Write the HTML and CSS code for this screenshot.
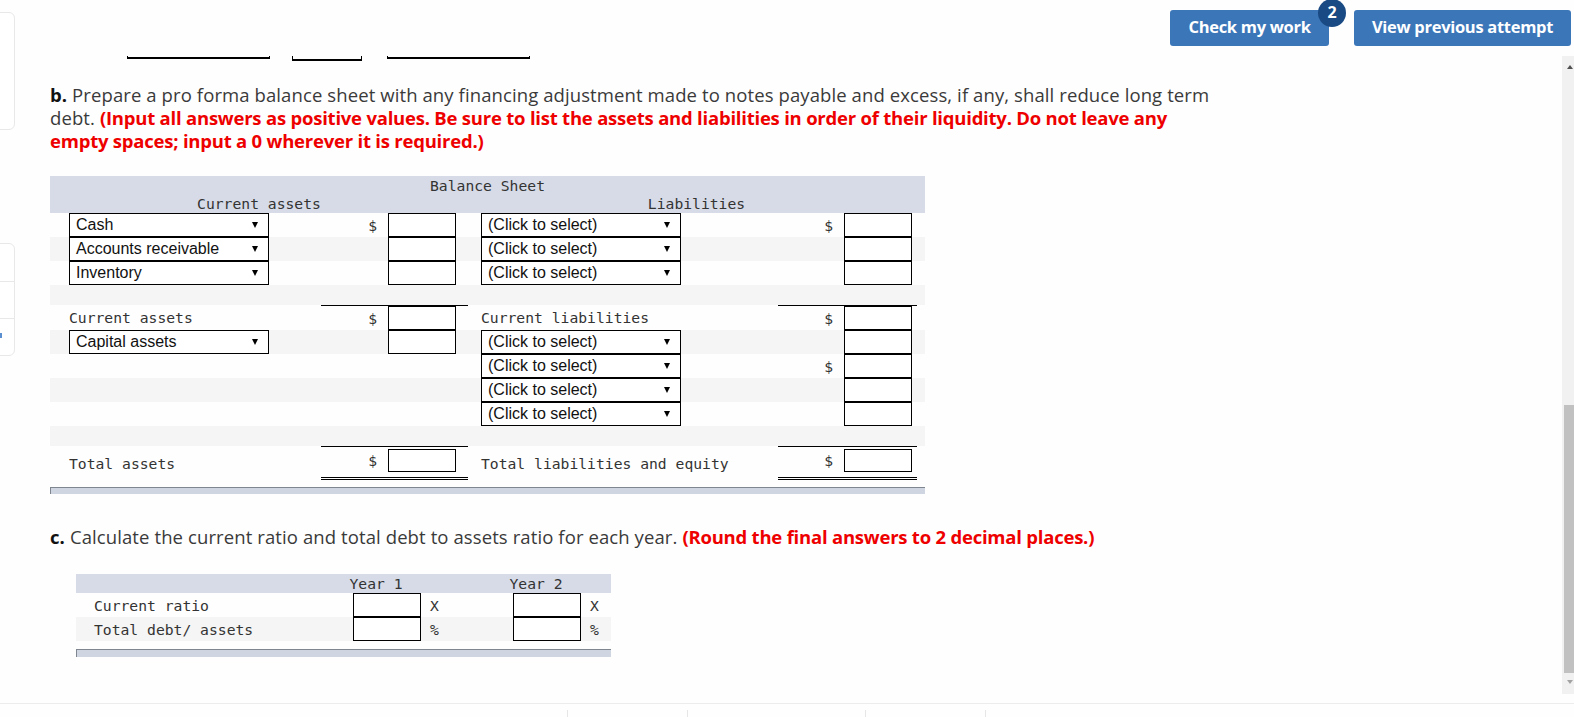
FILE: index.html
```html
<!DOCTYPE html>
<html lang="en">
<head>
<meta charset="utf-8">
<title>Pro forma balance sheet</title>
<link rel="stylesheet" href="styles.css">
</head>
<body>
<div class="page">
  <aside class="sidebar">
    <div class="card card-top"></div>
    <div class="card card-list">
      <div class="seg"></div>
      <div class="seg"></div>
      <div class="seg"><span class="chev"></span></div>
    </div>
  </aside>

  <div class="main">
    <div class="toolbar">
      <button class="btn btn-check">Check my work<span class="badge">2</span></button>
      <button class="btn btn-view">View previous attempt</button>
    </div>

    <div class="body">
      <div class="content">
        <div class="blanks">
          <span class="blank blank-a"></span>
          <span class="blank blank-b"></span>
          <span class="blank blank-c"></span>
        </div>

        <p class="prompt"><b>b.</b> Prepare a pro forma balance sheet with any financing adjustment made to notes payable and excess, if any, shall reduce long term<br>debt. <strong class="warn">(Input all answers as positive values. Be sure to list the assets and liabilities in order of their liquidity. Do not leave any<br>empty spaces; input a 0 wherever it is required.)</strong></p>

        <div class="bs">
          <div class="bs-head">
            <div class="bs-title">Balance Sheet</div>
            <div class="bs-groups"><span>Current assets</span><span>Liabilities</span></div>
          </div>

          <div class="bs-row">
            <div class="lcell"><div class="sel"><span>Cash</span><i class="arrow"></i></div></div>
            <div class="mcell"><span class="cur">$</span><input class="box" type="text"></div>
            <div class="rcell"><div class="sel"><span>(Click to select)</span><i class="arrow"></i></div></div>
            <div class="mcell mcell-r"><span class="cur">$</span><input class="box" type="text"></div>
          </div>
          <div class="bs-row alt">
            <div class="lcell"><div class="sel"><span>Accounts receivable</span><i class="arrow"></i></div></div>
            <div class="mcell"><input class="box" type="text"></div>
            <div class="rcell"><div class="sel"><span>(Click to select)</span><i class="arrow"></i></div></div>
            <div class="mcell mcell-r"><input class="box" type="text"></div>
          </div>
          <div class="bs-row">
            <div class="lcell"><div class="sel"><span>Inventory</span><i class="arrow"></i></div></div>
            <div class="mcell"><input class="box" type="text"></div>
            <div class="rcell"><div class="sel"><span>(Click to select)</span><i class="arrow"></i></div></div>
            <div class="mcell mcell-r"><input class="box" type="text"></div>
          </div>
          <div class="bs-row alt spacer"></div>

          <div class="bs-row sub">
            <div class="lcell mono">Current assets</div>
            <div class="mcell line"><span class="cur">$</span><input class="box" type="text"></div>
            <div class="rcell mono">Current liabilities</div>
            <div class="mcell mcell-r line"><span class="cur">$</span><input class="box" type="text"></div>
          </div>
          <div class="bs-row alt">
            <div class="lcell"><div class="sel"><span>Capital assets</span><i class="arrow"></i></div></div>
            <div class="mcell"><input class="box" type="text"></div>
            <div class="rcell"><div class="sel"><span>(Click to select)</span><i class="arrow"></i></div></div>
            <div class="mcell mcell-r"><input class="box" type="text"></div>
          </div>
          <div class="bs-row">
            <div class="lcell"></div>
            <div class="mcell"></div>
            <div class="rcell"><div class="sel"><span>(Click to select)</span><i class="arrow"></i></div></div>
            <div class="mcell mcell-r"><span class="cur">$</span><input class="box" type="text"></div>
          </div>
          <div class="bs-row alt">
            <div class="lcell"></div>
            <div class="mcell"></div>
            <div class="rcell"><div class="sel"><span>(Click to select)</span><i class="arrow"></i></div></div>
            <div class="mcell mcell-r"><input class="box" type="text"></div>
          </div>
          <div class="bs-row">
            <div class="lcell"></div>
            <div class="mcell"></div>
            <div class="rcell"><div class="sel"><span>(Click to select)</span><i class="arrow"></i></div></div>
            <div class="mcell mcell-r"><input class="box" type="text"></div>
          </div>
          <div class="bs-row alt spacer"></div>

          <div class="bs-row total">
            <div class="lcell mono">Total assets</div>
            <div class="mcell line dbl"><span class="cur">$</span><input class="box box-total" type="text"></div>
            <div class="rcell mono">Total liabilities and equity</div>
            <div class="mcell mcell-r line dbl"><span class="cur">$</span><input class="box box-total" type="text"></div>
          </div>
          <div class="tbl-foot"></div>
        </div>

        <p class="prompt prompt-c"><b>c.</b> Calculate the current ratio and total debt to assets ratio for each year. <strong class="warn">(Round the final answers to 2 decimal places.)</strong></p>

        <div class="ratio">
          <div class="r-row r-head">
            <span></span>
            <span class="yr">Year 1</span>
            <span></span>
            <span class="yr">Year 2</span>
            <span></span>
          </div>
          <div class="r-row">
            <span class="r-label">Current ratio</span>
            <span class="r-in"><input class="box" type="text"></span>
            <span class="r-unit">X</span>
            <span class="r-in"><input class="box" type="text"></span>
            <span class="r-unit">X</span>
          </div>
          <div class="r-row alt">
            <span class="r-label">Total debt/ assets</span>
            <span class="r-in"><input class="box" type="text"></span>
            <span class="r-unit">%</span>
            <span class="r-in"><input class="box" type="text"></span>
            <span class="r-unit">%</span>
          </div>
          <div class="tbl-foot"></div>
        </div>
      </div>

      <div class="scrollbar">
        <span class="sb-up"></span>
        <span class="sb-thumb"></span>
        <span class="sb-down"></span>
      </div>
    </div>
  </div>

  <footer class="footer">
    <div class="footer-line">
      <span class="tick t1"></span>
      <span class="tick t2"></span>
      <span class="tick t3"></span>
      <span class="tick t4"></span>
    </div>
  </footer>
</div>
</body>
</html>
```

FILE: styles.css
```css
* { box-sizing: border-box; }

html, body {
  margin: 0;
  padding: 0;
  background: #fefefe;
}

.page {
  width: 1574px;
  height: 717px;
  overflow: hidden;
  display: grid;
  grid-template-columns: 16px 1fr;
  grid-template-rows: 694px 23px;
  font-family: "Open Sans", Lato, sans-serif;
  color: #333;
}

/* ---------- left side cards ---------- */
.sidebar {
  grid-row: 1;
  grid-column: 1;
  display: flex;
  flex-direction: column;
}
.card {
  margin-left: -12px;
  width: 27px;
  border: 1px solid #e8e8e8;
  border-radius: 6px;
  background: #fff;
}
.card-top {
  margin-top: 12px;
  height: 118px;
}
.card-list {
  margin-top: 113px;
  height: 113px;
  display: flex;
  flex-direction: column;
}
.seg {
  height: 37px;
  border-top: 1px solid #e8e8e8;
}
.seg:first-child { border-top: 0; }
.chev {
  display: block;
  width: 2px;
  height: 5px;
  margin: 14px 0 0 11px;
  background: #5b8fd0;
}

/* ---------- main column ---------- */
.main {
  grid-row: 1;
  grid-column: 2;
  display: flex;
  flex-direction: column;
  min-width: 0;
}

.toolbar {
  height: 56px;
  display: flex;
  justify-content: flex-end;
  align-items: flex-start;
  gap: 25px;
  padding: 10px 3px 0 0;
}
.btn {
  position: relative;
  height: 36px;
  padding: 0 0 3px;
  border: 0;
  border-radius: 3px;
  background: #3b76b9;
  color: #fff;
  font-family: "Open Sans", Lato, sans-serif;
  font-weight: 700;
  font-size: 16.5px;
  letter-spacing: -0.3px;
}
.btn-check { width: 159px; }
.btn-view { width: 217px; }
.badge {
  position: absolute;
  top: -11px;
  right: -17px;
  width: 28px;
  height: 28px;
  border-radius: 50%;
  background: #1a4a83;
  color: #fff;
  font-size: 16px;
  font-weight: 700;
  line-height: 27px;
  text-align: center;
  letter-spacing: 0;
}

.body {
  flex: 1;
  display: flex;
  min-height: 0;
}
.content {
  flex: 1;
  padding-left: 34px;
  min-width: 0;
}

/* ---------- leftover blanks at the top ---------- */
.blanks {
  display: flex;
  align-items: flex-start;
  height: 6px;
}
.blank {
  display: block;
  border: 1px solid #000;
  border-top: 0;
  border-bottom-width: 2px;
}
.blank-a { margin-left: 77px; width: 143px; height: 3px; }
.blank-b { margin-left: 22px; width: 70px; height: 5px; }
.blank-c { margin-left: 25px; width: 143px; height: 3px; }

/* ---------- prompts ---------- */
.prompt {
  margin: 21px 0 0;
  font-size: 18.5px;
  line-height: 23px;
  color: #3a3a3a;
  white-space: nowrap;
  letter-spacing: 0.1px;
}
.prompt b { color: #111; font-weight: 700; }
.warn { color: #ee0000; font-weight: 700; letter-spacing: -0.22px; }
.prompt-c { margin-top: 31px; }

/* ---------- balance sheet table ---------- */
.bs {
  margin-top: 24px;
  width: 875px;
  font-family: "DejaVu Sans Mono", "Liberation Mono", monospace;
  font-size: 14.7px;
  color: #333;
}
.bs-head {
  height: 37px;
  background: #d6dbe7;
}
.bs-title {
  text-align: center;
  line-height: 19px;
}
.bs-groups {
  display: grid;
  grid-template-columns: 418px 457px;
  text-align: center;
  line-height: 18px;
}
.bs-row {
  display: grid;
  grid-template-columns: 271px 147px 310px 139px 8px;
  height: 24px;
  align-items: stretch;
}
.alt { background: #f5f5f5; }
.spacer { height: 20px; }
.sub { height: 25px; }
.total { height: 34px; }

.lcell, .rcell {
  display: flex;
  align-items: center;
}
.lcell { padding-left: 19px; }
.rcell { padding-left: 13px; }

.mcell {
  display: flex;
  justify-content: flex-end;
  align-items: stretch;
  padding-right: 12px;
}
.mcell-r { padding-right: 5px; }
.line { border-top: 1px solid #000; }
.dbl {
  border-bottom: 3px double #000;
  padding-top: 2px;
  padding-bottom: 5px;
}

.cur {
  display: flex;
  align-items: center;
  margin-right: 11px;
}

.box {
  display: block;
  width: 68px;
  height: 24px;
  margin: 0;
  padding: 0;
  border: 1px solid #000;
  border-radius: 0;
  background: #fff;
  font: 16px "Liberation Sans", Arial, sans-serif;
}
.box-total { height: 23px; }

.sel {
  width: 200px;
  height: 24px;
  border: 1px solid #000;
  background: #fff;
  display: flex;
  align-items: center;
  justify-content: space-between;
  padding: 0 10px 0 6px;
  font: 16px "Liberation Sans", Arial, sans-serif;
  color: #111;
}
.arrow {
  display: block;
  width: 0;
  height: 0;
  border-left: 3.5px solid transparent;
  border-right: 3.5px solid transparent;
  border-top: 6px solid #000;
}

.tbl-foot {
  margin-top: 7px;
  height: 7px;
  border-top: 1px solid #7f868f;
  border-left: 1px solid #7f868f;
  background: #cfd5e1;
}

/* ---------- ratio table ---------- */
.ratio {
  margin: 26px 0 0 26px;
  width: 535px;
  font-family: "DejaVu Sans Mono", "Liberation Mono", monospace;
  font-size: 14.7px;
  color: #333;
}
.r-row {
  display: grid;
  grid-template-columns: 273px 76px 84px 76px 26px;
  height: 24px;
  align-items: stretch;
}
.r-head {
  height: 19px;
  background: #d6dbe7;
  line-height: 19px;
}
.yr {
  text-align: center;
  padding-right: 22px;
}
.r-label {
  display: flex;
  align-items: center;
  padding-left: 18px;
}
.r-in {
  display: flex;
  padding-left: 4px;
}
.r-unit {
  display: flex;
  align-items: center;
  padding-left: 5px;
}
.ratio .tbl-foot {
  margin-top: 8px;
  height: 8px;
}

/* ---------- scrollbar ---------- */
.scrollbar {
  width: 12px;
  height: 638px;
  background: #f1f1f1;
  display: flex;
  flex-direction: column;
}
.sb-up {
  display: block;
  width: 0;
  height: 0;
  margin: 9px 0 0 5px;
  border-left: 3.5px solid transparent;
  border-right: 3.5px solid transparent;
  border-bottom: 4px solid #505050;
}
.sb-thumb {
  display: block;
  margin: 336px 0 0 2px;
  width: 10px;
  height: 268px;
  background: #c1c1c1;
}
.sb-down {
  display: block;
  width: 0;
  height: 0;
  margin: 7px 0 0 5px;
  border-left: 3.5px solid transparent;
  border-right: 3.5px solid transparent;
  border-top: 4px solid #a3a3a3;
}

/* ---------- footer ---------- */
.footer {
  grid-row: 2;
  grid-column: 1 / span 2;
  padding-top: 9px;
}
.footer-line {
  display: flex;
  border-top: 1px solid #ececec;
  height: 14px;
}
.tick {
  display: block;
  width: 1px;
  height: 7px;
  margin-top: 6px;
  background: #e6e6e6;
}
.t1 { margin-left: 567px; }
.t2 { margin-left: 119px; }
.t3 { margin-left: 177px; }
.t4 { margin-left: 119px; }
```
